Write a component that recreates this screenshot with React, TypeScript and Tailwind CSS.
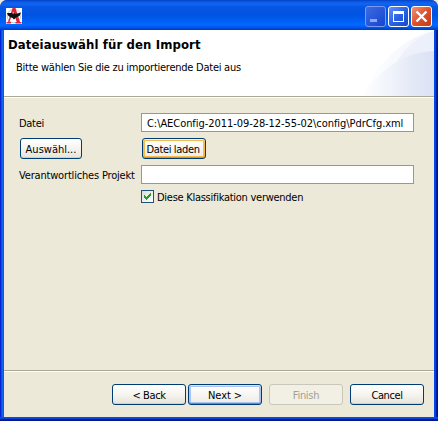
import type { ReactNode } from "react";

const xpButton =
  "flex h-[21px] items-center justify-center rounded-[3px] border border-[#003c74] whitespace-pre";
const plainFace =
  "bg-linear-to-b from-white via-[#f5f4ef] to-[#e6e3d8] shadow-[inset_0_-1px_0_#d6d0c5]";

function Button({ className, children }: { className: string; children: ReactNode }) {
  return <button className={`${xpButton} ${className}`}>{children}</button>;
}

function Text({ className = "", children }: { className?: string; children: ReactNode }) {
  return <span className={`block pt-0.5 whitespace-pre ${className}`}>{children}</span>;
}

function AppIcon() {
  return (
    <svg width="16" height="16" viewBox="0 0 16 16">
      <rect width="16" height="16" fill="#fff" />
      <circle cx="8" cy="8" r="6.8" fill="none" stroke="#aebdca" strokeWidth=".8" />
      <path d="M6.500 0h3l4.500 14h1.500v1.500h-6V14h1.200L7.200 3.500 3.500 14H5v1.500H.5V14H2z" fill="#d9273c" />
      <path d="M1 5h5l1 1 1-1 1.500 1L15 4.500 13.500 8 11 9 9.500 10 8 11.500 6.500 10 4 9 2 7.500z" fill="#111" />
    </svg>
  );
}

function TitleBar() {
  return (
    <header className="flex h-[30px] shrink-0 items-start rounded-t-[6px] bg-[linear-gradient(to_bottom,#0541c5_0px,#0a5de8_2px,#1264f2_4px,#0557e3_7px,#0053e0_15px,#0062f8_22px,#0468ff_25px,#0050e4_28px,#0038bd_30px)] pr-1.5 pl-1.5">
      <div className="mt-2 flex-1">
        <AppIcon />
      </div>
      <div className="mt-1.5 flex gap-0.5">
        <button className="h-[21px] w-[21px] rounded-[3px] border border-[#7d9bee] bg-linear-to-br from-[#3c6be3] to-[#1544cf]">
          <svg width="19" height="19" viewBox="0 0 19 19">
            <path d="M4 12h7v3H4z" fill="#91a8ec" />
          </svg>
        </button>
        <button className="h-[21px] w-[21px] rounded-[3px] border border-white bg-linear-to-br from-[#6690f5] via-[#2a62e5] to-[#1749c5]">
          <svg width="19" height="19" viewBox="0 0 19 19" shapeRendering="crispEdges">
            <path d="M4 4h11v11H4zM5 7v7h9V7z" fill="#fff" fillRule="evenodd" />
          </svg>
        </button>
        <button className="h-[21px] w-[21px] rounded-[3px] border border-white bg-linear-to-br from-[#ee9273] via-[#e0502a] to-[#c33b12]">
          <svg width="19" height="19" viewBox="0 0 19 19">
            <path d="M4.5 4.5L14.5 14.5M14.5 4.5L4.5 14.5" stroke="#fff" strokeWidth="2.4" />
          </svg>
        </button>
      </div>
    </header>
  );
}

function Banner() {
  return (
    <section className="relative h-[66px] shrink-0 bg-white">
      <svg className="absolute right-0 bottom-0" width="74" height="66" viewBox="0 0 74 66">
        <defs>
          <linearGradient id="arcA" x1="0" x2="1">
            <stop offset="0" stopColor="#fff" />
            <stop offset="1" stopColor="#f0f3fb" />
          </linearGradient>
          <linearGradient id="arcB" gradientUnits="userSpaceOnUse" x1="0" x2="74" y1="0" y2="0">
            <stop offset="0" stopColor="#fff" />
            <stop offset=".4" stopColor="#f0f4fb" />
            <stop offset=".7" stopColor="#e4e9f6" />
            <stop offset="1" stopColor="#dbe2f5" />
          </linearGradient>
        </defs>
        <path d="M2 66C14 38 40 8 74 1v65z" fill="url(#arcA)" />
        <path d="M34 36C44 20 56 6 74 2v30z" fill="#e9eefa" opacity=".7" />
        <path d="M2 66C18 42 42 22 74 21v45z" fill="url(#arcB)" />
      </svg>
      <h1 className="relative pt-[7px] pl-1 text-[13px] leading-4 font-bold tracking-[0.11px] whitespace-pre">
        Dateiauswähl für den Import
      </h1>
      <p className="relative pt-[7px] pl-3 text-[11px] leading-4 tracking-[-0.25px] whitespace-pre">
        Bitte wählen Sie die zu importierende Datei aus
      </p>
    </section>
  );
}

export default function App() {
  return (
    <div className="h-[421px] w-[438px] bg-[#ece9d8]">
      <div className="flex h-full flex-col overflow-hidden rounded-t-[7px] bg-[#0831d9] text-[11px] leading-[13px] text-black [font-family:'DejaVu_Sans_Condensed','DejaVu_Sans',sans-serif] [font-stretch:condensed]">
        <TitleBar />
        <div className="flex min-h-0 flex-1 flex-col bg-[linear-gradient(to_right,#0019cf_0px,#0831d9_1px,#166aee_2px,#0855dd_4px,#0855dd_434px,#0048f1_434px,#0040e8_436px,#001ea0_436px,#00138c_438px)] px-1">
          <Banner />
          <main className="h-[272px] shrink-0 border-t border-[#aca899] bg-[#ece9d8] shadow-[inset_0_1px_0_#fff]">
            <div className="grid grid-cols-[122px_273px] pt-4 pl-[15px]">
              <label className="flex h-[19px] items-center">
                <Text className="tracking-[-0.3px]">Datei</Text>
              </label>
              <div className="flex h-[19px] items-center border border-[#7f9db9] bg-white pl-[5px]">
                <Text className="tracking-[-0.06px]">C:\AEConfig-2011-09-28-12-55-02\config\PdrCfg.xml</Text>
              </div>
              <Button className={`mt-1.5 ml-px w-[62px] ${plainFace}`}>
                <Text>Auswähl...</Text>
              </Button>
              <Button className="mt-1.5 ml-px w-[64px] bg-linear-to-b from-white to-[#eeece4] pr-0.5 shadow-[inset_0_1px_0_#fff0cf,inset_0_-1px_0_#e59700,inset_0_0_0_2px_#f9b949]">
                <Text className="tracking-[-0.35px]">Datei laden</Text>
              </Button>
              <label className="mt-1.5 flex h-[19px] items-center">
                <Text className="tracking-[-0.18px]">Verantwortliches Projekt</Text>
              </label>
              <div className="mt-1.5 h-[19px] border border-[#7f9db9] bg-white" />
              <label className="col-start-2 mt-1.5 flex h-[13px] items-center gap-[3px]">
                <span className="h-[13px] w-[13px] border border-[#1c5180] bg-linear-to-br from-[#dcdcd7] to-white">
                  <svg width="11" height="11" viewBox="0 0 11 11" shapeRendering="crispEdges">
                    <path
                      d="M2 4h1v3H2zM3 5h1v3H3zM4 6h1v3H4zM5 5h1v3H5zM6 4h1v3H6zM7 3h1v3H7zM8 2h1v3H8z"
                      fill="#21a121"
                    />
                  </svg>
                </span>
                <Text className="tracking-[-0.27px]">Diese Klassifikation verwenden</Text>
              </label>
            </div>
          </main>
          <footer className="h-[49px] shrink-0 bg-[#ece9d8]">
            <div className="h-[2px]" />
            <div className="h-[2px] border-t border-[#aca899] bg-white" />
            <div className="flex pt-3 pl-[108px]">
              <Button className={`w-[74px] ${plainFace}`}>
                <Text className="tracking-[-0.4px]">&lt; Back</Text>
              </Button>
              <Button className="ml-0.5 w-[74px] bg-linear-to-b from-white to-[#eeece4] shadow-[inset_0_1px_0_#cee7ff,inset_0_-1px_0_#6982ee,inset_0_0_0_2px_#a9c4f3]">
                <Text className="tracking-[-0.1px]">Next &gt;</Text>
              </Button>
              <Button className="ml-[7px] w-[74px] border-[#c9c7ba]! bg-[#f2f0e4] text-[#a1a192]">
                <Text className="tracking-[-0.3px]">Finish</Text>
              </Button>
              <Button className={`ml-[7px] w-[74px] ${plainFace}`}>
                <Text className="tracking-[-0.4px]">Cancel</Text>
              </Button>
            </div>
          </footer>
          <div className="-mx-1 h-1 bg-[linear-gradient(to_bottom,#0855dd_0px,#0441d8_2px,#001ea0_2px,#00138c_4px)]" />
        </div>
      </div>
    </div>
  );
}
